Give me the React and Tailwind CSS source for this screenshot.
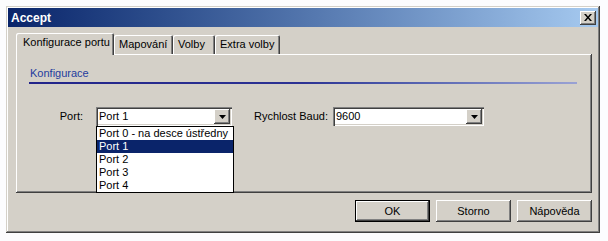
import React from "react";

const raised =
  "shadow-[inset_-1px_-1px_0_#404040,inset_1px_1px_0_#ffffff,inset_-2px_-2px_0_#808080,inset_2px_2px_0_#d4d0c8]";
const sunken =
  "shadow-[inset_1px_1px_0_#808080,inset_2px_2px_0_#404040,inset_-1px_-1px_0_#ffffff,inset_-2px_-2px_0_#d4d0c8]";

function Arrow() {
  return (
    <div className={`w-[16px] h-[15px] bg-[#d4d0c8] ${raised} flex items-center justify-center`}>
      <svg width="7" height="4" viewBox="0 0 7 4">
        <path d="M0 0H7L3.5 4Z" fill="#000" />
      </svg>
    </div>
  );
}

function Combo({ value, width, children }) {
  return (
    <div className={`relative h-[19px] bg-white ${sunken} flex items-center pl-[3px] pr-[2px]`} style={{ width }}>
      <span className="flex-1 leading-none">{value}</span>
      <Arrow />
      {children}
    </div>
  );
}

function Btn({ label, def }) {
  return (
    <div
      className={`w-[75px] h-[22px] bg-[#d4d0c8] flex items-center justify-center ${
        def
          ? "border border-black shadow-[inset_-1px_-1px_0_#404040,inset_1px_1px_0_#ffffff,inset_-2px_-2px_0_#808080]"
          : raised
      }`}
    >
      {label}
    </div>
  );
}

export default function App() {
  const items = ["Port 0 - na desce ústředny", "Port 1", "Port 2", "Port 3", "Port 4"];
  return (
    <div className="w-[608px] h-[241px] bg-[#fcfcfe] pt-[6px] pl-[6px] font-['Liberation_Sans',Arial,sans-serif] text-[11px] text-black overflow-hidden">
      <div className="w-[594px] h-[227px] bg-[#d4d0c8] p-[2px] shadow-[inset_-1px_-1px_0_#404040,inset_1px_1px_0_#d4d0c8,inset_-2px_-2px_0_#808080,inset_2px_2px_0_#ffffff] flex flex-col">
        {/* title bar */}
        <div className="h-[19px] bg-gradient-to-r from-[#0a246a] to-[#a6caf0] flex items-center pl-[3px] pr-[2px]">
          <span className="flex-1 text-white font-bold text-[12px] leading-none">Accept</span>
          <div className={`w-[16px] h-[14px] bg-[#d4d0c8] ${raised} flex items-center justify-center`}>
            <svg width="8" height="7" viewBox="0 0 8 7">
              <path d="M0 0h2l2 2.5L6 0h2L5 3.5 8 7H6L4 4.5 2 7H0l3-3.5Z" fill="#000" />
            </svg>
          </div>
        </div>

        {/* tabs */}
        <div className="ml-[8px] mt-[6px] flex items-end h-[21px]">
          <div className="relative z-10 w-[98px] h-[22px] -mb-px bg-[#d4d0c8] rounded-t-[2px] shadow-[inset_1px_1px_0_#ffffff,inset_-1px_0_0_#404040,inset_-2px_0_0_#808080] flex items-center pl-[7px] pb-[3px]">
            Konfigurace portu
          </div>
          <div className="w-[59px] h-[19px] rounded-t-[2px] shadow-[inset_1px_1px_0_#ffffff,inset_-1px_0_0_#404040,inset_-2px_0_0_#808080] flex items-center pl-[5px]">
            Mapování
          </div>
          <div className="w-[42px] h-[19px] rounded-t-[2px] shadow-[inset_1px_1px_0_#ffffff,inset_-1px_0_0_#404040,inset_-2px_0_0_#808080] flex items-center pl-[5px]">
            Volby
          </div>
          <div className="w-[65px] h-[19px] rounded-t-[2px] shadow-[inset_1px_1px_0_#ffffff,inset_-1px_0_0_#404040,inset_-2px_0_0_#808080] flex items-center pl-[5px]">
            Extra volby
          </div>
        </div>

        {/* panel */}
        <div className={`ml-[8px] w-[576px] h-[139px] ${raised} flex flex-col pt-[12px]`}>
          <div className="ml-[14px] text-[#1f3c9e] leading-[14px]">Konfigurace</div>
          <div className="ml-[13px] mt-[2px] w-[548px] h-[2px] bg-gradient-to-r from-[#22248a] via-[#2c3294] to-[#9aa2d4]" />
          <div className="mt-[23px] flex items-center">
            <div className="w-[67px] text-right">Port:</div>
            <div className="ml-[13px]">
              <Combo value="Port 1" width={136}>
                <div className="absolute left-0 top-full w-[138px] bg-white border border-black flex flex-col z-20">
                  {items.map((t, i) => (
                    <div
                      key={t}
                      className={`h-[13px] leading-[13px] pl-[2px] ${i === 1 ? "bg-[#0a246a] text-white" : ""}`}
                    >
                      {t}
                    </div>
                  ))}
                </div>
              </Combo>
            </div>
            <div className="ml-[22px] w-[79px]">Rychlost Baud:</div>
            <Combo value="9600" width={151} />
          </div>
        </div>

        {/* buttons */}
        <div className="mt-[7px] ml-[8px] w-[576px] flex justify-end gap-[6px]">
          <Btn label="OK" def />
          <Btn label="Storno" />
          <Btn label="Nápověda" />
        </div>
      </div>
    </div>
  );
}
